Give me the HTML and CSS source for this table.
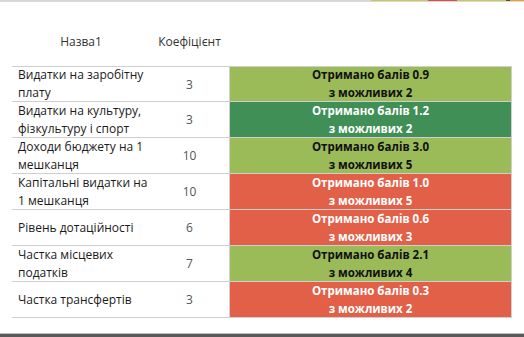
FILE: index.html
```html
<!DOCTYPE html>
<html>
<head>
<meta charset="utf-8">
<link rel="stylesheet" href="styles.css">
</head>
<body>
<div class="topbar">
  <div class="seg seg-gap"></div>
  <div class="seg seg-yg1"></div>
  <div class="seg seg-red"></div>
  <div class="seg seg-yg2"></div>
  <div class="seg seg-dark"></div>
  <div class="seg seg-orange"></div>
</div>
<div class="table">
  <div class="hcell hname">Назва1</div>
  <div class="hcell hnum">Коефіцієнт</div>
  <div class="hcell"></div>

  <div class="cell name first">Видатки на заробітну плату</div>
  <div class="cell num first">3</div>
  <div class="cell score first lg">Отримано балів 0.9<br>з можливих 2</div>

  <div class="cell name">Видатки на культуру, фізкультуру і спорт</div>
  <div class="cell num">3</div>
  <div class="cell score dg">Отримано балів 1.2<br>з можливих 2</div>

  <div class="cell name">Доходи бюджету на 1 мешканця</div>
  <div class="cell num">10</div>
  <div class="cell score lg">Отримано балів 3.0<br>з можливих 5</div>

  <div class="cell name">Капітальні видатки на 1 мешканця</div>
  <div class="cell num">10</div>
  <div class="cell score rd">Отримано балів 1.0<br>з можливих 5</div>

  <div class="cell name">Рівень дотаційності</div>
  <div class="cell num">6</div>
  <div class="cell score rd">Отримано балів 0.6<br>з можливих 3</div>

  <div class="cell name">Частка місцевих податків</div>
  <div class="cell num">7</div>
  <div class="cell score lg">Отримано балів 2.1<br>з можливих 4</div>

  <div class="cell name last">Частка трансфертів</div>
  <div class="cell num last">3</div>
  <div class="cell score rd last">Отримано балів 0.3<br>з можливих 2</div>
</div>
<div class="bottombar">
  <div class="bb-line"></div>
</div>
</body>
</html>
```
FILE: styles.css
```css
html, body {
  margin: 0;
  padding: 0;
  background: #ffffff;
  width: 524px;
  height: 337px;
  overflow: hidden;
  font-family: "Open Sans", "Liberation Sans", sans-serif;
}
body {
  display: flex;
  flex-direction: column;
}
.topbar {
  height: 2px;
  background: #d8d8d8;
  display: flex;
}
.seg { height: 1px; }
.seg-gap { width: 371px; }
.seg-yg1 { width: 57px; background: #c9c85a; }
.seg-red { width: 29px; background: #e04a48; }
.seg-yg2 { width: 49px; background: #c9c85a; }
.seg-dark { width: 4px; background: #5a4a30; }
.seg-orange { width: 14px; background: #f0a020; }

.table {
  margin-left: 12px;
  width: 500px;
  display: grid;
  grid-template-columns: 138px 79px 283px;
  grid-auto-rows: 36px;
  grid-template-rows: 64px;
  font-size: 12px;
  color: #222;
}
.hcell {
  display: flex;
  align-items: center;
  justify-content: center;
  padding-top: 14px;
  color: #333;
  font-size: 12px;
}
.cell {
  border-bottom: 1px solid #cfcfcf;
  display: flex;
  align-items: center;
}
.cell.first { border-top: 1px solid #cfcfcf; }
.name {
  padding-left: 6px;
  line-height: 18px;
  color: #1a1a1a;
}
.num {
  justify-content: center;
  color: #555;
}
.score {
  justify-content: center;
  text-align: center;
  font-weight: bold;
  line-height: 18px;
  font-size: 11.5px;
  border-left: 1px solid #cfcfcf;
  border-right: 1px solid #cfcfcf;
}
.lg { background: #9bbb59; color: #111; }
.dg { background: #3f8f57; color: #fff; }
.rd { background: #e25f48; color: #fff; }
.score.first { border-top: 1px solid #cfcfcf; }
.bottombar {
  margin-top: auto;
  height: 4px;
  background: #5a5a5a;
}
.bb-line {
  height: 1px;
  background: #bdbdbd;
}
```
